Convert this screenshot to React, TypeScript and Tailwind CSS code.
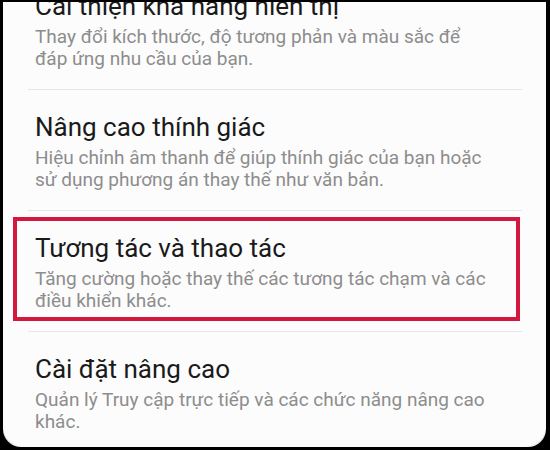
const items = [
  {
    title: "Cải thiện khả năng hiển thị",
    lines: ["Thay đổi kích thước, độ tương phản và màu sắc để", "đáp ứng nhu cầu của bạn."],
  },
  {
    title: "Nâng cao thính giác",
    lines: ["Hiệu chỉnh âm thanh để giúp thính giác của bạn hoặc", "sử dụng phương án thay thế như văn bản."],
  },
  {
    title: "Tương tác và thao tác",
    lines: ["Tăng cường hoặc thay thế các tương tác chạm và các", "điều khiển khác."],
    highlight: true,
  },
  {
    title: "Cài đặt nâng cao",
    lines: ["Quản lý Truy cập trực tiếp và các chức năng nâng cao", "khác."],
  },
];

export default function App() {
  return (
    <div className="h-[450px] w-[550px] bg-black pt-[2px] pb-[3px] pl-[3px] pr-[4px] font-['Roboto','Liberation_Sans',sans-serif]">
      <div className="h-full w-full overflow-hidden rounded-b-[18px] bg-[#ececec]">
        <div className="h-full w-full overflow-hidden rounded-b-[22px] bg-[#fcfcfc]">
          <div className="-mt-[33px]">
            {items.map((item, i) => (
              <div key={i}>
                {i > 0 && <div className="ml-[25px] mr-[24px] h-px bg-[#e6e6e6]" />}
                <div className="relative pt-[22px] pb-[19px] pl-[32px]">
                  <div className="text-[26px] leading-[30px] text-[#1a1a1a]">{item.title}</div>
                  <div className="mt-[5px] text-[19px] leading-[22px] text-[#8d8d8d]">
                    {item.lines[0]}
                    <br />
                    {item.lines[1]}
                  </div>
                  {item.highlight && (
                    <div className="absolute top-[6px] bottom-[10px] left-[10px] right-[26px] border-4 border-[#d3173f]" />
                  )}
                </div>
              </div>
            ))}
          </div>
        </div>
      </div>
    </div>
  );
}
